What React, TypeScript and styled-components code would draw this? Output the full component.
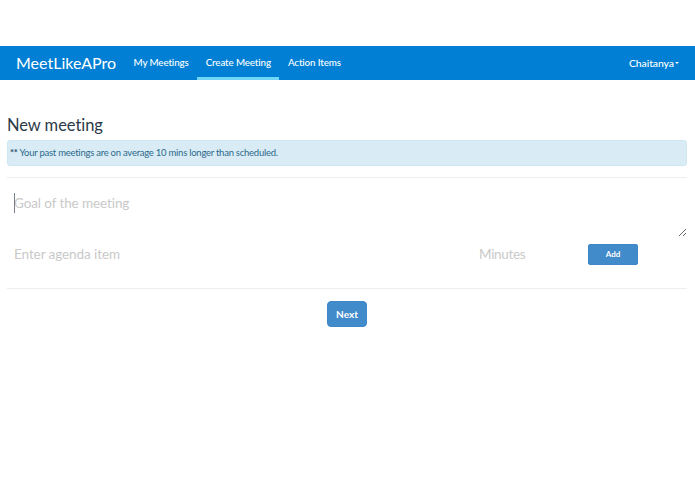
import React from "react";
import styled, { createGlobalStyle } from "styled-components";

const GlobalStyle = createGlobalStyle`
  html, body {
    margin: 0;
    padding: 0;
    background: #fff;
    font-family: "Lato", "Noto Sans", sans-serif;
    color: #2c3e50;
  }
`;

const Page = styled.div`
  width: 695px;
  height: 494px;
  padding-top: 46px;
  box-sizing: border-box;
  overflow: hidden;
`;

const Navbar = styled.nav`
  height: 34px;
  background: #007fd4;
  display: flex;
  align-items: stretch;
  padding: 0 16px;
  color: #fff;
`;

const Brand = styled.a`
  font-size: 16px;
  line-height: 33px;
  width: 109px;
`;

const NavLink = styled.a<{ $active?: boolean }>`
  font-size: 9.8px;
  font-weight: 500;
  letter-spacing: -0.12px;
  line-height: 33px;
  padding: 0 8.5px;
  box-sizing: border-box;
  border-bottom: 3px solid ${(p) => (p.$active ? "#6fd6f7" : "transparent")};
`;

const UserMenu = styled.a`
  margin-left: auto;
  font-size: 10.4px;
  font-weight: 500;
  letter-spacing: -0.05px;
  line-height: 33px;
  display: flex;
  align-items: center;
  gap: 1px;
`;

const Caret = styled.span`
  width: 0;
  height: 0;
  border-left: 2.5px solid transparent;
  border-right: 2.5px solid transparent;
  border-top: 2.5px solid #fff;
`;

const Content = styled.main`
  padding: 0 8px 0 7px;
`;

const Title = styled.h2`
  font-size: 16.5px;
  font-weight: 400;
  letter-spacing: -0.05px;
  line-height: 22px;
  margin: 34px 0 4px;
  color: #2b3a48;
`;

const Alert = styled.div`
  height: 26px;
  box-sizing: border-box;
  background: #d9ecf5;
  border: 1px solid #d0e7f2;
  border-radius: 3px;
  color: #2c6a8c;
  font-size: 9.5px;
  letter-spacing: -0.25px;
  line-height: 24px;
  padding-left: 2px;
`;

const Stars = styled.b`
  color: #1f4e6b;
`;

const Divider = styled.hr`
  border: 0;
  border-top: 1px solid #eeeeee;
  margin: 11px 0 0;
`;

const GoalField = styled.div`
  position: relative;
  margin-top: 7px;
`;

const Goal = styled.textarea`
  display: block;
  width: 100%;
  height: 52px;
  box-sizing: border-box;
  border: 0;
  outline: 0;
  padding: 8px 7px;
  font: inherit;
  font-size: 13.5px;
  letter-spacing: -0.1px;
  line-height: 20px;
  color: #2c3e50;
  &::placeholder {
    color: #c9c9c9;
    opacity: 1;
  }
`;

const TextCursor = styled.span`
  position: absolute;
  left: 7px;
  top: 8px;
  width: 1px;
  height: 20px;
  background: #77808a;
`;

const AgendaRow = styled.div`
  display: flex;
  align-items: center;
  height: 33px;
  margin-bottom: 18px;
  padding-left: 7px;
`;

const AgendaInput = styled.input`
  border: 0;
  outline: 0;
  padding: 0;
  width: 465px;
  font: inherit;
  font-size: 13.5px;
  letter-spacing: -0.08px;
  background: transparent;
  &::placeholder {
    color: #c9c9c9;
    opacity: 1;
  }
`;

const MinutesInput = styled(AgendaInput)`
  width: 109px;
  letter-spacing: -0.3px;
`;

const AddButton = styled.button`
  width: 50px;
  height: 21px;
  margin-top: 1px;
  border: 1px solid #3f87c6;
  border-radius: 2px;
  background: #428bca;
  color: #fff;
  font: inherit;
  font-size: 8px;
  font-weight: 700;
  padding: 0;
`;

const Footer = styled.div`
  display: flex;
  justify-content: center;
  margin-top: 12px;
`;

const NextButton = styled.button`
  width: 40px;
  height: 26px;
  border: 1px solid #3f87c6;
  border-radius: 4px;
  background: #428bca;
  color: #fff;
  font: inherit;
  font-size: 10px;
  font-weight: 700;
  padding: 0;
`;

export default function App() {
  return (
    <Page>
      <GlobalStyle />
      <Navbar>
        <Brand>MeetLikeAPro</Brand>
        <NavLink>My Meetings</NavLink>
        <NavLink $active>Create Meeting</NavLink>
        <NavLink>Action Items</NavLink>
        <UserMenu>
          Chaitanya
          <Caret />
        </UserMenu>
      </Navbar>
      <Content>
        <Title>New meeting</Title>
        <Alert>
          <Stars>**</Stars> Your past meetings are on average 10 mins longer than scheduled.
        </Alert>
        <Divider />
        <GoalField>
          <Goal placeholder="Goal of the meeting" />
          <TextCursor />
        </GoalField>
        <AgendaRow>
          <AgendaInput placeholder="Enter agenda item" />
          <MinutesInput placeholder="Minutes" />
          <AddButton>Add</AddButton>
        </AgendaRow>
        <Divider />
        <Footer>
          <NextButton>Next</NextButton>
        </Footer>
      </Content>
    </Page>
  );
}
